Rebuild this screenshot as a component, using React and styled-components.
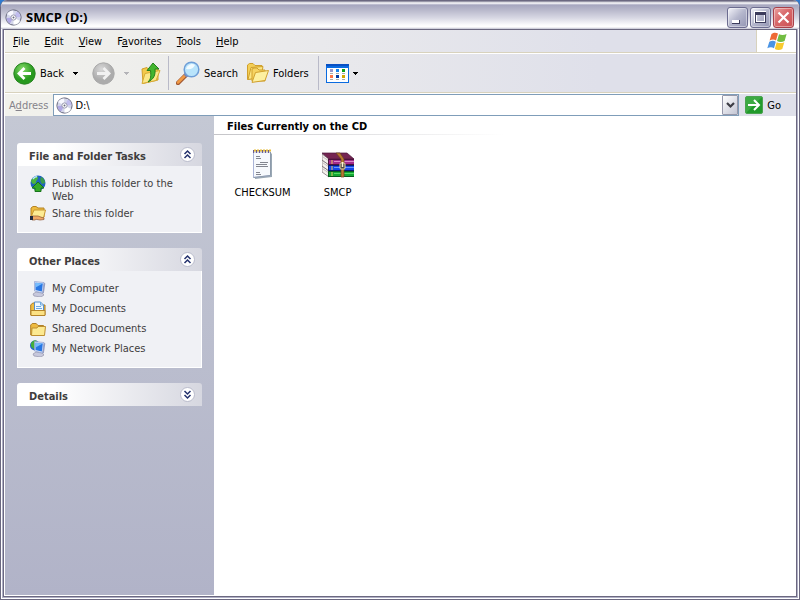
import React from "react";
import styled, { createGlobalStyle, css } from "styled-components";

const GlobalStyle = createGlobalStyle`
  * {
    box-sizing: border-box;
  }

  body {
    margin: 0;
    background: #2f7ad0;
  }

  body, button, input {
    font-family: "DejaVu Sans Condensed", Tahoma, "DejaVu Sans", sans-serif;
    font-size: 11px;
    line-height: 13px;
    color: #000;
  }

  button {
    padding: 0;
    border: none;
    background: none;
  }

  svg {
    display: block;
    flex: none;
  }
`;

const Window = styled.div`
  display: flex;
  flex-direction: column;
  min-height: 100vh;
  padding: 0 1px 1px;
  border: 1px solid #6b6880;
  border-top: none;
  border-radius: 7px 7px 0 0;
  background: #fff;
  overflow: hidden;
`;

const TitleBar = styled.header`
  display: flex;
  align-items: center;
  height: 29px;
  margin: 0 -1px;
  padding: 4px 5px 0 4px;
  border-top: 1px solid #6b6880;
  background: linear-gradient(
    #77758c 0,
    #fff 2px,
    #a6a6bf 4px,
    #b4b4c8 8px,
    #d8d8e4 17px,
    #fbfbfd 24px,
    #fff 26px,
    #c0c0d0 28px
  );
`;

const Title = styled.h1`
  flex: 1;
  margin: 0 0 0 4px;
  font-family: "Trebuchet MS", "Open Sans", sans-serif;
  font-size: 13px;
  line-height: 16px;
  font-weight: bold;
`;

const WindowButtons = styled.div`
  display: flex;
  gap: 2px;
`;

const WindowButton = styled.button`
  width: 21px;
  height: 21px;
  border: 1px solid ${(props) => (props.$close ? "#a8404a" : "#6c6c90")};
  border-radius: 3px;
  background: ${(props) =>
    props.$close
      ? "linear-gradient(135deg, #e8a0a0, #d8686a 45%, #cc5054)"
      : "linear-gradient(135deg, #f4f4fa, #b4b6cc 50%, #9496b4)"};
  box-shadow: inset 0 0 0 1px rgba(255, 255, 255, 0.4);
`;

const Frame = styled.div`
  flex: 1;
  display: flex;
  flex-direction: column;
  border: 1px solid #b0b0c6;
  border-top: none;
`;

const Inner = styled.div`
  flex: 1;
  display: flex;
  flex-direction: column;
  border: 1px solid #6b6880;
  padding: 0 0 1px 1px;
  background: #fff;
`;

const barBackground = css`
  background: linear-gradient(90deg, #f2f2ec, #e9e9ec 40%, #dfe0ea 75%);
`;

const MenuBar = styled.nav`
  display: flex;
  height: 23px;
  padding-left: 1px;
  border-bottom: 1px solid #d8d2bd;
  ${barBackground}
`;

const MenuItem = styled.button`
  padding: 0 8px 0 7px;
  white-space: nowrap;
`;

const Logo = styled.div`
  display: flex;
  align-items: center;
  justify-content: center;
  width: 40px;
  margin-left: auto;
  border-left: 1px solid #d8d2bd;
  background: #fff;
`;

const ToolBar = styled.div`
  display: flex;
  align-items: center;
  height: 40px;
  padding-left: 8px;
  border-top: 1px solid #fff;
  border-bottom: 1px solid #d8d2bd;
  ${barBackground}
`;

const ToolButton = styled.button`
  display: flex;
  align-items: center;
  gap: 4px;
  margin-right: ${(props) => props.$after || 0}px;
`;

const Separator = styled.div`
  width: 1px;
  height: 34px;
  margin-right: 7px;
  background: #b9bac8;
`;

const AddressBar = styled.form`
  display: flex;
  align-items: center;
  height: 23px;
  padding: 0 15px 0 4px;
  border-top: 1px solid #fff;
  ${barBackground}
`;

const AddressLabel = styled.label`
  margin-right: 5px;
  color: #85838a;
`;

const AddressField = styled.div`
  flex: 1;
  display: flex;
  align-items: center;
  height: 22px;
  padding-left: 2px;
  border: 1px solid #7f9db9;
  background: #fff;
`;

const AddressInput = styled.input`
  flex: 1;
  min-width: 0;
  padding: 1px 2px 0;
  border: none;
  outline: none;
  background: none;
`;

const DropButton = styled.button`
  display: flex;
  align-items: center;
  justify-content: center;
  width: 16px;
  height: 20px;
  border: 1px solid #9798aa;
  border-radius: 1px;
  background: linear-gradient(135deg, #fff, #c4c6d4);
`;

const GoButton = styled.button`
  display: flex;
  align-items: center;
  gap: 4px;
  margin-left: 6px;
`;

const Content = styled.div`
  flex: 1;
  display: flex;
`;

const SideBar = styled.aside`
  flex: none;
  display: flex;
  flex-direction: column;
  gap: 15px;
  width: 209px;
  padding: 27px 12px;
  background: linear-gradient(#c4c8d4, #b1b3c8);
`;

const PanelHeader = styled.div`
  display: flex;
  align-items: center;
  justify-content: space-between;
  height: 23px;
  padding: 0 6px 0 12px;
  border-radius: 3px 3px 0 0;
  background: linear-gradient(90deg, #fff 20%, #d6d7e0);
`;

const PanelTitle = styled.h2`
  margin: 0;
  padding-top: 3px;
  font-size: 11px;
  color: #3f3d3d;
`;

const PanelBody = styled.ul`
  display: flex;
  flex-direction: column;
  gap: 3px;
  margin: 0;
  padding: 9px 12px 10px;
  border: 1px solid #fff;
  border-top: none;
  background: #f0f1f5;
  list-style: none;
`;

const TaskLink = styled.a`
  display: flex;
  gap: 6px;
  height: ${(props) => (props.$tall ? 27 : 17)}px;
  color: #3f3d3d;
  text-decoration: none;
`;

const TaskText = styled.span`
  padding-top: 2px;
`;

const Files = styled.main`
  flex: 1;
  background: #fff;
`;

const GroupTitle = styled.h2`
  margin: 0;
  padding: 4px 13px 1px;
  font-size: 11px;
  border-bottom: 1px solid;
  border-image: linear-gradient(90deg, #c4c4c8, #fff 290px) 1;
`;

const FileGrid = styled.div`
  display: flex;
  flex-wrap: wrap;
  padding: 14px 11px;
`;

const FileItem = styled.button`
  display: flex;
  flex-direction: column;
  align-items: center;
  gap: 5px;
  width: 75px;
`;

const DiscIcon = () => (
  <svg width="17" height="17" viewBox="0 0 17 17">
    <circle cx="8.5" cy="8.5" r="7.6" fill="#d4d6ea" stroke="#66687c" />
    <path d="M8.5 8.5L2 5A7 7 0 0 1 8 1.4z" fill="#f8f8ff" />
    <path d="M8.5 8.5L15 12A7 7 0 0 1 8.5 15.6z" fill="#fff" />
    <path d="M8.5 8.5L1.5 9A7 7 0 0 0 5 14.5z" fill="#b0a8e4" />
    <path d="M8.5 8.5L12 2.4A7 7 0 0 1 15.5 8z" fill="#c0bcee" />
    <circle cx="8.5" cy="8.5" r="2.6" fill="#fff" stroke="#9a9ab0" />
    <circle cx="8.5" cy="8.5" r="1" fill="#67687e" />
  </svg>
);

const RoundArrow = ({ disabled }) => (
  <svg width="23" height="23" viewBox="0 0 23 23">
    <defs>
      <radialGradient id={disabled ? "fwd" : "back"} cx="40%" cy="30%">
        <stop offset="0" stopColor={disabled ? "#d8d8d8" : "#87dc6a"} />
        <stop offset="1" stopColor={disabled ? "#acacac" : "#27991e"} />
      </radialGradient>
    </defs>
    <circle
      cx="11.5"
      cy="11.5"
      r="10.7"
      fill={disabled ? "url(#fwd)" : "url(#back)"}
      stroke={disabled ? "#aaa" : "#298422"}
    />
    <path
      d={disabled ? "M5 11.5h12M11.5 6l5.5 5.5-5.5 5.5" : "M18 11.5H6M11.5 6L6 11.5l5.5 5.5"}
      fill="none"
      stroke={disabled ? "#f1f1f1" : "#fff"}
      strokeWidth="2.8"
    />
  </svg>
);

const Caret = ({ color = "#000" }) => (
  <svg width="5" height="3" viewBox="0 0 5 3" shapeRendering="crispEdges">
    <path d="M0 0h5v1H4v1H3v1H2V2H1V1H0z" fill={color} />
  </svg>
);

const UpFolderIcon = () => (
  <svg width="20" height="23" viewBox="0 0 20 23">
    <path d="M1 7l5-1.500L8 8l9-2v12L2 21.500z" fill="#f3ca4c" stroke="#d1a02c" />
    <path d="M1 21.500l3-10 15-3-4 10z" fill="#fbe88a" stroke="#d6ab35" />
    <path
      d="M7 20c3-3 3-6 2.500-11.500H6l6-7.500L18 7h-4c.5 6-1 10-7 13z"
      fill="#43b52f"
      stroke="#23811b"
    />
  </svg>
);

const SearchIcon = () => (
  <svg width="24" height="24" viewBox="0 0 24 24">
    <path d="M2 22l8-8" stroke="#a25a34" strokeWidth="4.500" strokeLinecap="round" />
    <path d="M2 21.500l7-7" stroke="#f19a45" strokeWidth="2.500" strokeLinecap="round" />
    <path d="M9 15l2-2" stroke="#7c83aa" strokeWidth="4" />
    <circle cx="15.5" cy="8.500" r="7.300" fill="#b9e4fb" stroke="#6e9ed7" strokeWidth="1.500" />
    <path d="M10 8a6 6 0 0 1 9-4c-2 4-5 5-9 4z" fill="#f1fbff" />
  </svg>
);

const FoldersIcon = () => (
  <svg width="22" height="20" viewBox="0 0 22 20">
    <g stroke="#d0a02d">
      <path d="M.5 16.500V2l2-1.500H6L8 2.500h7v11z" fill="#f4cf57" />
      <path d="M1 16.500l3-12 12-1-2 11z" fill="#fbe684" />
      <path d="M5 18V6l2-1h3l2 2h6v11z" fill="#f6d463" />
      <path d="M5 19.400L8.500 9.500l13-2L18 17.500z" fill="#fdf0a0" />
    </g>
  </svg>
);

const ViewsIcon = () => (
  <svg width="23" height="19" viewBox="0 0 23 19" shapeRendering="crispEdges">
    <rect width="23" height="19" fill="#0a6be0" />
    <rect y="0" width="23" height="2" fill="#0850c4" />
    <rect x="1" y="4" width="21" height="14" fill="#fff" />
    <path d="M4 5h3v3H4z" fill="#9898cc" />
    <path d="M10 5h3v3h-3z" fill="#1784ee" />
    <path d="M16 5h3v3h-3z" fill="#0da11a" />
    <path d="M4 11h3v3H4z" fill="#ff7446" />
    <path d="M10 11h3v3h-3z" fill="#003aa4" />
    <path d="M16 11h3v3h-3z" fill="#d3a700" />
    <path d="M4 9.500h3M10 9.500h3M16 9.500h3M4 15.500h3M10 15.500h3M16 15.500h3" stroke="#aaa" />
  </svg>
);

const GoIcon = () => (
  <svg width="18" height="18" viewBox="0 0 18 18">
    <rect x=".5" y=".5" width="17" height="17" rx="1.500" fill="#219a2b" stroke="#4ba24f" />
    <path d="M1 1h16L1 17z" fill="#58ba5a" opacity=".5" />
    <path d="M3 9h11M9 4l5 5-5 5" fill="none" stroke="#fff" strokeWidth="2" />
  </svg>
);

const WindowsLogo = () => (
  <svg width="20" height="19" viewBox="0 0 20 19">
    <path d="M4.500 2C7 .2 9 .5 11 1.600L9 8.500C7 7.300 5 7.300 2.600 8.600z" fill="#ee6a35" />
    <path d="M12 2.200c2.500 1.200 5 1 7.600-.2l-2 7c-2.600 1.200-5 1.200-7.600 0z" fill="#72bd42" />
    <path d="M2.300 9.700c2.400-1.300 4.500-1.300 6.500 0L7 16.300c-2-1.300-4.300-1.200-6.700 0z" fill="#4a94e4" />
    <path d="M9.700 10.200c2.500 1.200 5 1.200 7.600 0l-2 6.800c-2.500 1.300-5 1.300-7.500 0z" fill="#f8ca2e" />
  </svg>
);

const ChevronBadge = ({ down }) => (
  <svg width="16" height="16" viewBox="0 0 16 16">
    <circle cx="7.500" cy="7.500" r="7" fill="#fff" stroke="#b9bbcb" />
    <path
      d={down ? "M4.500 4l3 3 3-3M4.500 8l3 3 3-3" : "M4.500 7l3-3 3 3M4.500 11l3-3 3 3"}
      fill="none"
      stroke="#24326e"
      strokeWidth="1.500"
    />
  </svg>
);

const PublishIcon = () => (
  <svg width="16" height="17" viewBox="0 0 16 17">
    <circle cx="8" cy="8" r="7.500" fill="#1f62be" />
    <path d="M1 6c1-3 4-5 7-4 0 3-2 3-2 6-2 2-4 1-5-2z" fill="#4db43d" />
    <path d="M11 2c3 1 4 4 4 6l-3 1c-2-2-2-5-1-7z" fill="#3a9c4c" />
    <path d="M3 4q2-3 4-2" stroke="#b7e7ff" strokeWidth="1.500" fill="none" />
    <path d="M8 7l6 6h-3v3.500H5V13H2z" fill="#35a928" stroke="#16741b" />
  </svg>
);

const ShareIcon = () => (
  <svg width="16" height="16" viewBox="0 0 16 16">
    <path d="M1 12V3l2-1.500h3L8 3h6v9z" fill="#eebc3f" stroke="#b68425" />
    <path d="M1 12l3-7h11.500L13.500 13z" fill="#fdeb93" stroke="#c79633" />
    <path d="M2 11h3l3 0 4 1.500 2 .5v1.500l-4 .5-4-.7-1 .7H2z" fill="#f0a865" stroke="#8c5632" strokeWidth=".7" />
    <path d="M0 11h3v4H0z" fill="#222b40" />
  </svg>
);

const ComputerIcon = ({ network }) => (
  <svg width="16" height="17" viewBox="0 0 16 17">
    {network && (
      <>
        <circle cx="5" cy="5.500" r="5" fill="#2666c8" />
        <path d="M1 3q3-4 6-2L5 5l1 4q-4 0-5-3z" fill="#43ae3c" />
      </>
    )}
    <path d="M6 12l6 1 2 2-3 2-7-1-1-2z" fill="#c7c8dc" stroke="#9293ab" strokeWidth=".7" />
    <path d="M13.500 2.500l1.800 1-1.500 10-2-.7z" fill="#989dbd" />
    <path d="M4.500 1.500l9.500 1L12.500 13l-8-2z" fill="#d7e0f6" stroke="#8fa0d0" strokeWidth=".7" />
    <path d="M5.500 2.700l7.300.8-1 8-6.300-1.500z" fill="#2877e4" />
    <path d="M5.500 2.700l7.300.8-7.300 4z" fill="#76bcfc" />
  </svg>
);

const DocumentsIcon = () => (
  <svg width="16" height="17" viewBox="0 0 16 17">
    <path d="M.7 15V5l2-2H6l1 2h8v10z" fill="#efbd43" stroke="#ac7d25" />
    <path d="M4.500 2h6l3 3v7h-9z" fill="#eff8ff" stroke="#588fc9" />
    <path d="M10.500 2v3h3M6 6.500h5M6 8.500h6" fill="none" stroke="#6eaae2" />
    <path d="M1 10.500h14v5H1z" fill="#fbe184" stroke="#b4842b" />
  </svg>
);

const FolderIcon = () => (
  <svg width="16" height="17" viewBox="0 0 16 17">
    <path d="M.7 15V5l1.500-1.500h4L8 5.500h5.500V15z" fill="#edba40" stroke="#b08028" />
    <path d="M1.500 15.500L2 8h5l1-1.500h7.500l-1 9z" fill="#fce991" stroke="#bd8e30" />
  </svg>
);

const TextFileIcon = () => (
  <svg width="32" height="32" viewBox="0 0 32 32">
    <path d="M8 28l16-2V4l1 1v23l-17 2z" fill="#9aa8b4" />
    <path d="M6.500 3h17v23.500l-17 2z" fill="#f6f9fd" stroke="#a9b4d8" />
    <path d="M23.500 3v23.500l-17 2" fill="none" stroke="#8d9bab" />
    <path d="M6 2.500h18" stroke="#6b5c8c" strokeWidth="3" strokeDasharray="1 2" />
    <path d="M7 1.500h17" stroke="#e7bd39" strokeWidth="2" strokeDasharray="2 1" />
    <path
      d="M9 7.500h4M9 9.500h5M13 13.500h8M9 15.500h11M9 17.500h12M9 23.500h4M9 25.500h5"
      stroke="#838690"
    />
  </svg>
);

const Book = ({ y, color, shade, light }) => (
  <g>
    <path d={`M0 ${y - 5}l7 5v6l-7-5z`} fill="#f4f0ec" stroke="#5c5058" strokeWidth=".6" />
    <path d={`M1 ${y - 2}l6 4`} stroke="#a8a0a4" strokeWidth=".6" />
    <path d={`M6 ${y}h26v6H6z`} fill={shade} />
    <path d={`M7 ${y + 1}h25v4H7z`} fill={color} />
    <path d={`M12 ${y + 2}h20v1H12z`} fill={light} />
    <path d={`M10 ${y + 1}v4`} stroke="#e8c860" />
  </g>
);

const ArchiveIcon = () => (
  <svg width="32" height="32" viewBox="0 0 32 32">
    <Book y={22} color="#12a834" shade="#075c1c" light="#59da64" />
    <Book y={16} color="#1648e8" shade="#091b72" light="#6795ff" />
    <Book y={10} color="#a42c8c" shade="#4d103f" light="#dc88ca" />
    <path d="M0 4h25l7 6H7z" fill="#752552" stroke="#4b1439" strokeWidth=".7" />
    <path d="M14 4h4l4 6v18h-3V10z" fill="#b87830" stroke="#66401c" strokeWidth=".7" />
    <rect x="18" y="14" width="5" height="6" rx="1" fill="#504b45" stroke="#e4d5a4" />
    <path d="M20.500 13v5" stroke="#fff5cf" strokeWidth="1.500" />
  </svg>
);

const menus = [
  ["", "F", "ile"],
  ["", "E", "dit"],
  ["", "V", "iew"],
  ["F", "a", "vorites"],
  ["", "T", "ools"],
  ["", "H", "elp"],
];

const Panel = ({ title, items }) => (
  <section>
    <PanelHeader>
      <PanelTitle>{title}</PanelTitle>
      <button type="button" aria-label={title} aria-expanded={Boolean(items)}>
        <ChevronBadge down={!items} />
      </button>
    </PanelHeader>
    {items && (
      <PanelBody>
        {items.map(([icon, text, tall]) => (
          <li key={text}>
            <TaskLink href="#" $tall={tall}>
              {icon}
              <TaskText>{text}</TaskText>
            </TaskLink>
          </li>
        ))}
      </PanelBody>
    )}
  </section>
);

export default function App() {
  return (
    <Window>
      <GlobalStyle />
      <TitleBar>
        <DiscIcon />
        <Title>SMCP (D:)</Title>
        <WindowButtons>
          <WindowButton aria-label="Minimize">
            <svg width="19" height="19" shapeRendering="crispEdges">
              <path d="M4 12h8v4H4z" fill="#3c3c5c" />
              <path d="M4 12h7v3H4z" fill="#fff" />
            </svg>
          </WindowButton>
          <WindowButton aria-label="Maximize">
            <svg width="19" height="19" shapeRendering="crispEdges">
              <path d="M3 3h12v12H3zM6 7v6h7V7z" fill="#fff" fillRule="evenodd" />
              <path d="M4 4h11v11H4zM5 7v7h9V7z" fill="#3c3c5c" fillRule="evenodd" />
            </svg>
          </WindowButton>
          <WindowButton $close aria-label="Close">
            <svg width="19" height="19">
              <path d="M4.500 4.500l10 10M14.500 4.500l-10 10" stroke="#fff" strokeWidth="2.200" />
            </svg>
          </WindowButton>
        </WindowButtons>
      </TitleBar>
      <Frame>
        <Inner>
          <MenuBar>
            {menus.map(([before, key, after]) => (
              <MenuItem key={after}>
                {before}
                <u>{key}</u>
                {after}
              </MenuItem>
            ))}
            <Logo>
              <WindowsLogo />
            </Logo>
          </MenuBar>
          <ToolBar>
            <ToolButton $after={9}>
              <RoundArrow />
              Back
            </ToolButton>
            <ToolButton $after={14} aria-label="Back history">
              <Caret />
            </ToolButton>
            <ToolButton $after={9} aria-label="Forward" disabled>
              <RoundArrow disabled />
            </ToolButton>
            <ToolButton $after={12} aria-label="Forward history" disabled>
              <Caret color="#b4b4b8" />
            </ToolButton>
            <ToolButton $after={7} aria-label="Up">
              <UpFolderIcon />
            </ToolButton>
            <Separator />
            <ToolButton $after={9}>
              <SearchIcon />
              Search
            </ToolButton>
            <ToolButton $after={9}>
              <FoldersIcon />
              Folders
            </ToolButton>
            <Separator />
            <ToolButton aria-label="Views">
              <ViewsIcon />
              <Caret />
            </ToolButton>
          </ToolBar>
          <AddressBar onSubmit={(e) => e.preventDefault()}>
            <AddressLabel htmlFor="address">
              A<u>d</u>dress
            </AddressLabel>
            <AddressField>
              <DiscIcon />
              <AddressInput id="address" defaultValue="D:\" />
              <DropButton type="button" aria-label="Show addresses">
                <svg width="9" height="7" viewBox="0 0 9 7">
                  <path d="M1 1l3.500 3.500L8 1" fill="none" stroke="#3c3c44" strokeWidth="2.200" />
                </svg>
              </DropButton>
            </AddressField>
            <GoButton>
              <GoIcon />
              Go
            </GoButton>
          </AddressBar>
          <Content>
            <SideBar>
              <Panel
                title="File and Folder Tasks"
                items={[
                  [<PublishIcon />, "Publish this folder to the Web", true],
                  [<ShareIcon />, "Share this folder"],
                ]}
              />
              <Panel
                title="Other Places"
                items={[
                  [<ComputerIcon />, "My Computer"],
                  [<DocumentsIcon />, "My Documents"],
                  [<FolderIcon />, "Shared Documents"],
                  [<ComputerIcon network />, "My Network Places"],
                ]}
              />
              <Panel title="Details" />
            </SideBar>
            <Files>
              <GroupTitle>Files Currently on the CD</GroupTitle>
              <FileGrid>
                <FileItem>
                  <TextFileIcon />
                  CHECKSUM
                </FileItem>
                <FileItem>
                  <ArchiveIcon />
                  SMCP
                </FileItem>
              </FileGrid>
            </Files>
          </Content>
        </Inner>
      </Frame>
    </Window>
  );
}
